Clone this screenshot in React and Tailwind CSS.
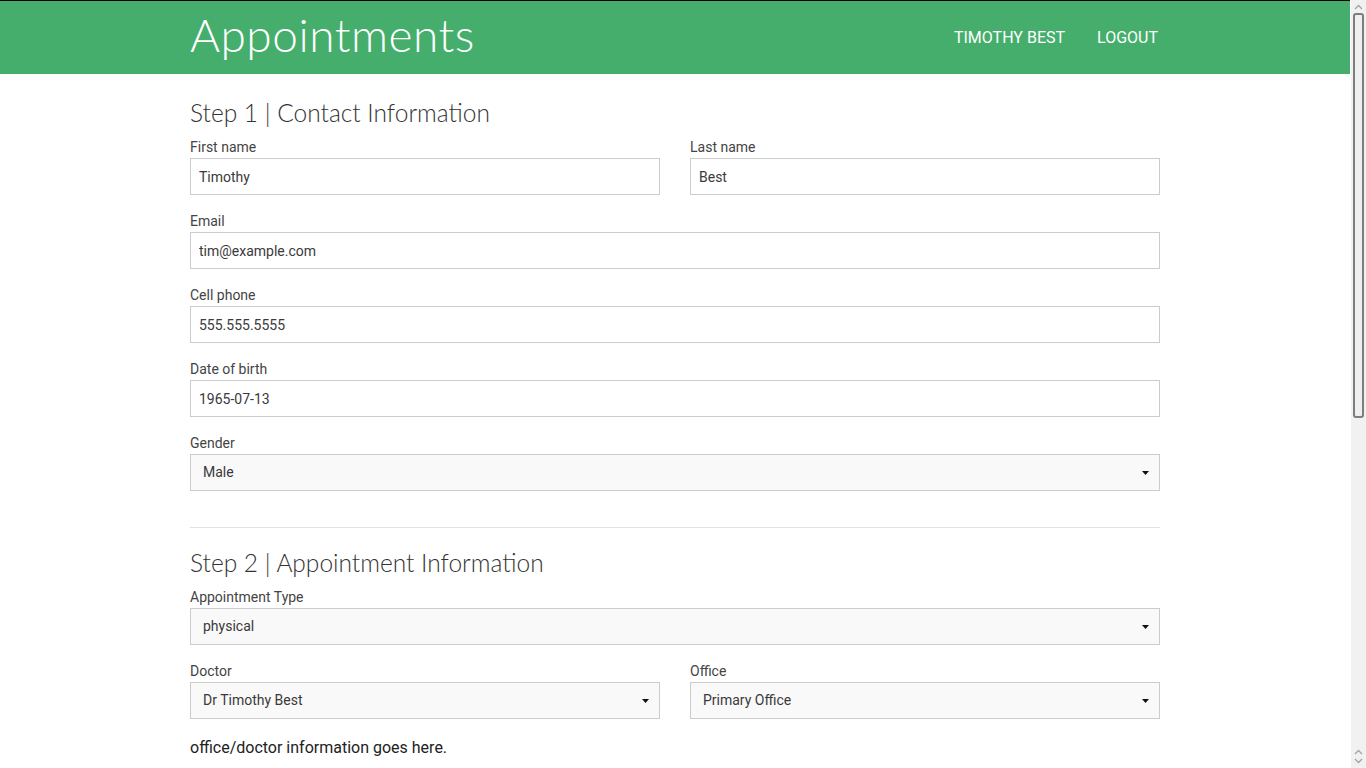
import { useState } from "react";

const headFont = { fontFamily: "Lato, 'Noto Sans', sans-serif" };

function Caret() {
  return (
    <svg width="7" height="4" viewBox="0 0 7 4" className="absolute right-[10px] top-1/2 -translate-y-1/2">
      <path d="M0 0 L7 0 L3.5 4 Z" fill="#111" />
    </svg>
  );
}

// fake classic scrollbar, the page runs longer than the window
function ScrollBar() {
  return (
    <div className="fixed top-0 right-0 w-[15px] h-screen bg-[#f1f1f1] flex flex-col items-center">
      <svg width="9" height="6" viewBox="0 0 9 6" className="mt-[4px] mb-[3px]">
        <path d="M1 5 L4.5 1.5 L8 5" stroke="#a3a3a3" strokeWidth="1.3" fill="none" />
      </svg>
      <div className="w-[11px] h-[405px] rounded-[3px] border-2 border-[#7d7d7d] bg-[#efefef]" />
      <div className="flex-1" />
      <svg width="9" height="6" viewBox="0 0 9 6" className="mb-[3px]">
        <path d="M1 5 L4.5 1.5 L8 5" stroke="#a3a3a3" strokeWidth="1.3" fill="none" />
      </svg>
      <svg width="9" height="6" viewBox="0 0 9 6" className="mb-[4px]">
        <path d="M1 1 L4.5 4.5 L8 1" stroke="#a3a3a3" strokeWidth="1.3" fill="none" />
      </svg>
    </div>
  );
}

const Field = ({ label, value, select, onChange }) => {
  return (
    <div className="mb-4">
      <div className="text-[14px] leading-[20px] text-[#444] mb-px">{label}</div>
      {select ? (
        <div className="relative h-[37px] border border-[#cccccc] bg-[#f9f9f9] flex items-center pl-[12px] text-[14px] text-[#3a3a3a]">
          {value}
          <Caret />
        </div>
      ) : (
        <input
          className="block w-full h-[37px] border border-[#cccccc] bg-white px-[8px] text-[14px] text-[#3a3a3a] outline-none"
          value={value}
          onChange={onChange}
        />
      )}
    </div>
  );
};

export default function App() {
  const [form, setForm] = useState({
    first: "Timothy",
    last: "Best",
    email: "tim@example.com",
    phone: "555.555.5555",
    dob: "1965-07-13",
  });

  const set = (k) => (e) => setForm({ ...form, [k]: e.target.value });

  return (
    <div className="min-h-screen bg-white mr-[16px]" style={{ fontFamily: "Roboto, 'Liberation Sans', sans-serif" }}>
      <div className="bg-[#45ae6c] border-t border-black h-[74px]">
        <div className="w-[970px] mx-auto h-full flex items-center justify-between">
          <h1 className="text-white text-[46px] font-light leading-none tracking-[0.5px] -mt-[5px]" style={headFont}>
            Appointments
          </h1>
          <div className="flex gap-[32px] text-white text-[16px] uppercase pr-[2px]">
            <a href="#">Timothy Best</a>
            <a href="#">Logout</a>
          </div>
        </div>
      </div>

      <div className="w-[970px] mx-auto pb-[640px]">
        {/* BEGIN: Step 1 */}
        <h2 className="mt-[26px] mb-[11px] text-[24.5px] leading-[26px] text-[#333] font-light" style={headFont}>
          Step 1 | Contact Information
        </h2>
        <div className="grid grid-cols-2 gap-x-[30px]">
          <Field label="First name" value={form.first} onChange={set("first")} />
          <Field label="Last name" value={form.last} onChange={set("last")} />
        </div>
        <Field label="Email" value={form.email} onChange={set("email")} />
        <Field label="Cell phone" value={form.phone} onChange={set("phone")} />
        <Field label="Date of birth" value={form.dob} onChange={set("dob")} />
        <Field label="Gender" value="Male" select />
        {/* END: Step 1 */}

        <hr className="mt-[36px] border-t border-[#e2e2e2]" />

        {/* BEGIN: Step 2 */}
        <h2 className="mt-[22px] mb-[11px] text-[24.5px] leading-[26px] text-[#333] font-light" style={headFont}>
          Step 2 | Appointment Information
        </h2>
        <Field label="Appointment Type" value="physical" select />
        <div className="grid grid-cols-2 gap-x-[30px]">
          <Field label="Doctor" value="Dr Timothy Best" select />
          <Field label="Office" value="Primary Office" select />
        </div>
        <p className="text-[16px] leading-[22px] text-[#222] mt-[2px]">office/doctor information goes here.</p>
        {/* END: Step 2 */}
      </div>
      <ScrollBar />
    </div>
  );
}
